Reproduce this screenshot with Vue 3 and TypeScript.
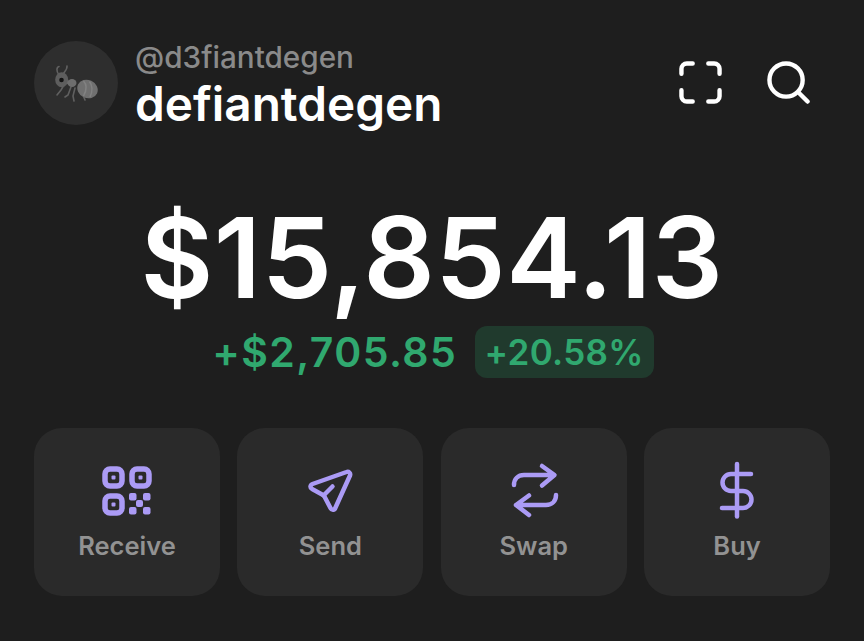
<script setup lang="ts">
const actions = [
  { label: 'Receive', icon: 'qr' },
  { label: 'Send', icon: 'send' },
  { label: 'Swap', icon: 'swap' },
  { label: 'Buy', icon: 'buy' },
]
</script>

<template>
  <main class="page">
    <header class="top">
      <div class="avatar">
        <svg class="ant" viewBox="0 0 44 38" aria-hidden="true">
          <path d="M5 10C2 6 2.500 2 5 1.500M9 9c2-3 4.500-5 4-8M10 20l-3 5-4 5M17 22l-3 8-3 2M21 23l-2 8 1 5M26 24l3 6 2 5" fill="none" stroke="#606060" stroke-width="1.600" stroke-linecap="round"/>
          <ellipse cx="7.700" cy="14.700" rx="6.500" ry="7.500" fill="#5e5e5e"/>
          <circle cx="7.500" cy="15" r="2.300" fill="#131313"/>
          <path d="M13 17l7 2" stroke="#666" stroke-width="3.500"/>
          <ellipse cx="18" cy="18" rx="4.500" ry="4" fill="#6e6e6e"/>
          <ellipse cx="33.500" cy="24" rx="10.500" ry="9" transform="rotate(25 33.500 24)" fill="#707070"/>
          <path d="M29.500 16c3.500 3.500 3 9.500 0 15M35.500 16.500c3 4 3 10 .5 15.500" fill="none" stroke="#828282" stroke-width="1.500"/>
        </svg>
      </div>
      <div class="names">
        <div class="handle">@d3fiantdegen</div>
        <div class="name">defiantdegen</div>
      </div>
      <div class="tools">
        <svg class="tool" viewBox="0 0 44 44" aria-hidden="true">
          <path d="M2.500 13V8a5.500 5.500 0 0 1 5.500-5.500h6M30 2.500h6a5.500 5.500 0 0 1 5.500 5.500v5M41.500 30v6a5.500 5.500 0 0 1-5.500 5.500h-6M14 41.500H8A5.500 5.500 0 0 1 2.500 36v-6" fill="none" stroke="#fff" stroke-width="4.500" stroke-linecap="round"/>
        </svg>
        <svg class="tool" viewBox="0 0 44 44" aria-hidden="true">
          <circle cx="19.500" cy="19.500" r="17" fill="none" stroke="#fff" stroke-width="4.500"/>
          <path d="M32 32l9.500 9.500" fill="none" stroke="#fff" stroke-width="4.500" stroke-linecap="round"/>
        </svg>
      </div>
    </header>

    <section class="balance">
      <div class="amount">$15,854.13</div>
      <div class="change">
        <span class="delta">+$2,705.85</span>
        <span class="pct">+20.58%</span>
      </div>
    </section>

    <nav class="actions">
      <button v-for="a in actions" :key="a.label" class="action">
        <svg v-if="a.icon === 'qr'" class="icon" viewBox="0 0 50 58" aria-hidden="true">
          <g transform="translate(0 5)">
            <rect x="3" y="3" width="17" height="17" rx="5" class="s thick"/>
            <rect x="30" y="3" width="17" height="17" rx="5" class="s thick"/>
            <rect x="3" y="30" width="17" height="17" rx="5" class="s thick"/>
            <rect x="9.500" y="9.500" width="4" height="4" rx="1" class="f"/>
            <rect x="36.500" y="9.500" width="4" height="4" rx="1" class="f"/>
            <rect x="9.500" y="36.500" width="4" height="4" rx="1" class="f"/>
            <rect x="27" y="27" width="7.500" height="7.500" rx="2" class="f"/>
            <rect x="41" y="27" width="7.500" height="7.500" rx="2" class="f"/>
            <rect x="34" y="34" width="7" height="7" rx="2" class="f"/>
            <rect x="27" y="41" width="7.500" height="7.500" rx="2" class="f"/>
            <rect x="41" y="41" width="7.500" height="7.500" rx="2" class="f"/>
          </g>
        </svg>
        <svg v-else-if="a.icon === 'send'" class="icon" viewBox="0 0 50 58" aria-hidden="true">
          <g transform="translate(-0.500 6.500)">
            <path d="M42 4.500 8 16.500c-2.500 1-2.700 3.800-.4 5l10.900 5.900a3 3 0 0 1 1.300 1.300l6.300 12c1.200 2.300 4 2 4.800-.5L45.500 8c.8-2.400-1.300-4.400-3.500-3.500Z" class="s"/>
            <path d="M19 28l9-9" class="s"/>
          </g>
        </svg>
        <svg v-else-if="a.icon === 'swap'" class="icon" viewBox="0 0 50 58" aria-hidden="true">
          <path d="M5 24c0-6 4-10 10-10h30M33 5l12.500 9L33 24.500" class="s"/>
          <path d="M47 34c0 6-4 10-10 10H7M20 34.500 7 44l13 10" class="s"/>
        </svg>
        <svg v-else class="icon" viewBox="0 0 50 58" aria-hidden="true">
          <path d="M25 3v52.500" class="s"/>
          <path d="M39 13H19a8.500 8.500 0 0 0 0 17h12a8.500 8.500 0 0 1 0 17H10" class="s"/>
        </svg>
        <span class="label">{{ a.label }}</span>
      </button>
    </nav>
  </main>
</template>

<style>
html, body { margin: 0; background: #1e1e1e; }
</style>

<style scoped>
.page {
  width: 864px;
  height: 641px;
  box-sizing: border-box;
  padding: 41px 34px 0;
  background: #1e1e1e;
  font-family: Inter, "Liberation Sans", sans-serif;
  display: flex;
  flex-direction: column;
}
.top { display: flex; align-items: center; height: 84px; }
.avatar {
  width: 84px; height: 84px; border-radius: 50%;
  background: #2e2e2e;
  display: flex; align-items: center; justify-content: center;
  flex: none;
}
.ant { width: 44px; height: 38px; margin-top: 2px; }
.names { margin-left: 17px; flex: 1; margin-top: 10px; }
.handle { font-size: 29.700px; line-height: 32px; font-weight: 500; color: #8a8a8a; }
.name { font-size: 47.700px; line-height: 62px; font-weight: 600; color: #fff; }
.tools { display: flex; align-items: center; gap: 45px; margin-right: 20px; margin-top: -1px; }
.tool { width: 43px; height: 43px; }
.balance { text-align: center; margin-top: 64px; }
.amount { font-size: 112px; line-height: 136px; font-weight: 600; color: #fff; letter-spacing: 0.5px; }
.change { display: flex; justify-content: center; align-items: center; gap: 17.500px; margin-top: 1px; margin-left: 2px; }
.delta { font-size: 41px; font-weight: 600; color: #30a86f; letter-spacing: 1.400px; }
.pct {
  font-size: 35px; font-weight: 600; color: #30a86f; letter-spacing: 0.300px;
  background: #203a2d; border-radius: 12px; padding: 5px 10px; line-height: 42px;
}
.actions { display: grid; grid-template-columns: repeat(4, 1fr); gap: 17.500px; margin-top: 50px; }
.action {
  height: 168px; border: 0; border-radius: 28px; background: #2a2a2a;
  font-family: inherit; padding: 33px 0 0;
  display: flex; flex-direction: column; align-items: center;
}
.icon { width: 50px; height: 58px; }
.label { font-size: 25.500px; line-height: 32px; font-weight: 600; color: #929292; margin-top: 11px; }
.s { fill: none; stroke: #ab9bf5; stroke-width: 4.500; stroke-linecap: round; stroke-linejoin: round; }
.thick { stroke-width: 5.500; }
.f { fill: #ab9bf5; }
</style>
